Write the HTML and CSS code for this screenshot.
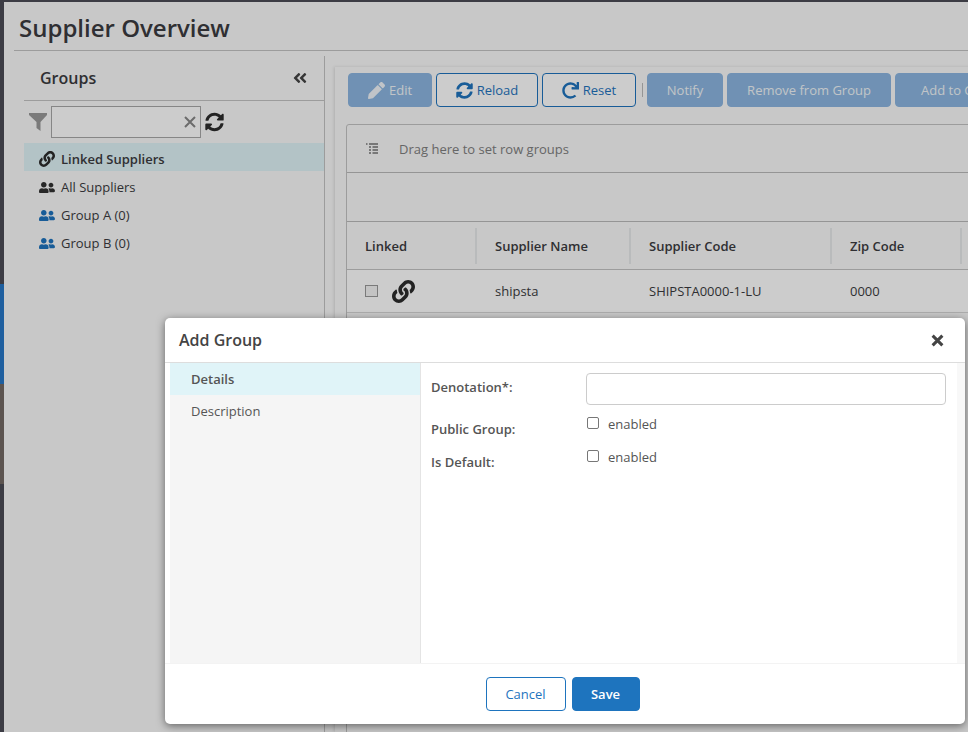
FILE: index.html
```html
<!DOCTYPE html>
<html>

<head>
    <title>Supplier Overview</title>
    <link rel="stylesheet" href="styles.css">
</head>

<body>
    <svg class="sprites" width="0" height="0">
        <symbol id="i-link" viewBox="0 0 512 512"><path d="M326.612 185.391c59.747 59.809 58.927 155.698.36 214.59-.11.12-.24.25-.36.37l-67.2 67.2c-59.27 59.27-155.699 59.262-214.96 0-59.27-59.26-59.27-155.7 0-214.96l37.106-37.106c9.84-9.84 26.786-3.3 27.294 10.606.648 17.722 3.826 35.527 9.69 52.721 1.986 5.822.567 12.262-3.783 16.612l-13.087 13.087c-28.026 28.026-28.905 73.66-1.155 101.96 28.024 28.579 74.086 28.749 102.325.51l67.2-67.19c28.191-28.191 28.073-73.757 0-101.83-3.701-3.694-7.429-6.564-10.341-8.569a16.037 16.037 0 0 1-6.947-12.606c-.396-10.567 3.348-21.456 11.698-29.806l21.054-21.055c5.521-5.521 14.182-6.199 20.584-1.731a152.482 152.482 0 0 1 20.522 17.197zM467.547 44.449c-59.261-59.262-155.69-59.27-214.96 0l-67.2 67.2c-.12.12-.25.25-.36.37-58.566 58.892-59.387 154.781.36 214.59a152.454 152.454 0 0 0 20.521 17.196c6.402 4.468 15.064 3.789 20.584-1.731l21.054-21.055c8.35-8.35 12.094-19.239 11.698-29.806a16.037 16.037 0 0 0-6.947-12.606c-2.912-2.005-6.64-4.875-10.341-8.569-28.073-28.073-28.191-73.639 0-101.83l67.2-67.19c28.239-28.239 74.3-28.069 102.325.51 27.75 28.3 26.872 73.934-1.155 101.96l-13.087 13.087c-4.35 4.35-5.769 10.79-3.783 16.612 5.864 17.194 9.042 34.999 9.69 52.721.509 13.906 17.454 20.446 27.294 10.606l37.106-37.106c59.271-59.259 59.271-155.699.001-214.959z"/></symbol>
        <symbol id="i-friends" viewBox="0 0 640 512"><path d="M192 256c61.9 0 112-50.1 112-112S253.9 32 192 32 80 82.1 80 144s50.1 112 112 112zm76.8 32h-8.3c-20.8 10-43.9 16-68.5 16s-47.6-6-68.5-16h-8.3C51.6 288 0 339.6 0 403.2V432c0 26.5 21.5 48 48 48h288c26.5 0 48-21.5 48-48v-28.8c0-63.6-51.6-115.2-115.2-115.2zM480 256c53 0 96-43 96-96s-43-96-96-96-96 43-96 96 43 96 96 96zm48 32h-3.8c-13.9 4.8-28.6 8-44.2 8s-30.3-3.2-44.2-8H432c-20.4 0-39.2 5.9-55.7 15.4 24.4 26.3 39.7 61.2 39.7 99.8v38.4c0 2.2-.5 4.3-.6 6.4H592c26.5 0 48-21.5 48-48 0-61.9-50.1-112-112-112z"/></symbol>
        <symbol id="i-sync" viewBox="0 0 512 512"><path d="M370.72 133.28C339.458 104.008 298.888 87.962 255.848 88c-77.458.068-144.328 53.178-162.791 126.85-1.344 5.363-6.122 9.15-11.651 9.15H24.103c-7.498 0-13.194-6.807-11.807-14.176C33.933 94.924 134.813 8 256 8c66.448 0 126.791 26.136 171.315 68.685L463.03 40.97C478.149 25.851 504 36.559 504 57.941V192c0 13.255-10.745 24-24 24H345.941c-21.382 0-32.09-25.851-16.971-40.971l41.75-41.749zM32 296h134.059c21.382 0 32.09 25.851 16.971 40.971l-41.75 41.75c31.262 29.273 71.835 45.319 114.876 45.28 77.418-.07 144.315-53.144 162.787-126.849 1.344-5.363 6.122-9.15 11.651-9.15h57.304c7.498 0 13.194 6.807 11.807 14.176C478.067 417.076 377.187 504 256 504c-66.448 0-126.791-26.136-171.315-68.685L48.97 471.03C33.851 486.149 8 475.441 8 454.059V320c0-13.255 10.745-24 24-24z"/></symbol>
        <symbol id="i-redo" viewBox="0 0 512 512"><path d="M500.33 0h-47.41a12 12 0 0 0-12 12.57l4 82.76A247.42 247.42 0 0 0 256 8C119.34 8 7.9 119.53 8 256.19 8.1 393.07 119.1 504 256 504a247.1 247.1 0 0 0 166.18-63.91 12 12 0 0 0 .48-17.43l-34-34a12 12 0 0 0-16.38-.55A176 176 0 1 1 402.1 157.8l-101.53-4.87a12 12 0 0 0-12.57 12v47.41a12 12 0 0 0 12 12h200.33a12 12 0 0 0 12-12V12a12 12 0 0 0-12-12z"/></symbol>
        <symbol id="i-pencil" viewBox="0 0 512 512"><path d="M497.9 142.1l-46.1 46.1c-4.7 4.7-12.3 4.7-17 0l-111-111c-4.7-4.7-4.7-12.3 0-17l46.1-46.1c18.7-18.7 49.1-18.7 67.9 0l60.1 60.1c18.8 18.7 18.8 49.1 0 67.9zM284.2 99.8L21.6 362.4.4 483.9c-2.9 16.4 11.4 30.6 27.8 27.8l121.5-21.3 262.6-262.6c4.7-4.7 4.7-12.3 0-17l-111-111c-4.8-4.7-12.4-4.7-17.1 0z"/></symbol>
        <symbol id="i-collapse" viewBox="0 0 448 512"><path d="M223.7 239l136-136c9.4-9.4 24.6-9.4 33.9 0l22.6 22.6c9.4 9.4 9.4 24.6 0 33.9L319.9 256l96.4 96.4c9.4 9.4 9.4 24.6 0 33.9L393.7 409c-9.4 9.4-24.6 9.4-33.9 0l-136-136c-9.5-9.4-9.5-24.6-.1-34zm-192 34l136 136c9.4 9.4 24.6 9.4 33.9 0l22.6-22.6c9.4-9.4 9.4-24.6 0-33.9L127.9 256l96.4-96.4c9.4-9.4 9.4-24.6 0-33.9L201.7 103c-9.4-9.4-24.6-9.4-33.9 0l-136 136c-9.5 9.4-9.5 24.6-.1 34z"/></symbol>
    </svg>

    <div class="app">
        <div class="strip">
            <div class="strip-top"></div>
            <div class="strip-blue"></div>
            <div class="strip-brown"></div>
            <div class="strip-dark"></div>
        </div>

        <div class="main">
            <div class="page-title">
                <h1>Supplier Overview</h1>
            </div>

            <div class="content">
                <div class="sidebar">
                    <div class="sidebar-head">
                        <h2>Groups</h2>
                        <svg class="collapse-icon"><use href="#i-collapse"></use></svg>
                    </div>

                    <div class="filter-row">
                        <svg class="filter-icon" viewBox="0 0 18 18"><path d="M0 0h18v2l-6.500 7v9l-4-3v-6L0 2z"></path></svg>
                        <div class="filter-box">
                            <input class="filter-input" type="text">
                            <svg class="clear-icon" viewBox="0 0 12 12"><path d="M1 1l10 10M11 1L1 11"></path></svg>
                        </div>
                        <svg class="reload-icon"><use href="#i-sync"></use></svg>
                    </div>

                    <div class="group-item group-item-active">
                        <svg class="group-link"><use href="#i-link"></use></svg>
                        Linked Suppliers
                    </div>
                    <div class="group-item">
                        <svg class="group-icon"><use href="#i-friends"></use></svg>
                        All Suppliers
                    </div>
                    <div class="group-item">
                        <svg class="group-icon group-icon-blue"><use href="#i-friends"></use></svg>
                        Group A (0)
                    </div>
                    <div class="group-item">
                        <svg class="group-icon group-icon-blue"><use href="#i-friends"></use></svg>
                        Group B (0)
                    </div>
                </div>

                <div class="panel">
                    <div class="toolbar">
                        <button class="btn btn-off btn-edit"><svg class="btn-icon"><use href="#i-pencil"></use></svg>Edit</button>
                        <button class="btn btn-line btn-reload"><svg class="btn-icon"><use href="#i-sync"></use></svg>Reload</button>
                        <button class="btn btn-line btn-reset"><svg class="btn-icon"><use href="#i-redo"></use></svg>Reset</button>
                        <div class="toolbar-sep"></div>
                        <button class="btn btn-off btn-notify">Notify</button>
                        <button class="btn btn-off btn-remove">Remove from Group</button>
                        <button class="btn btn-off btn-add">Add to Group</button>
                    </div>

                    <div class="grid">
                        <div class="grid-groups">
                            <svg class="groups-icon" viewBox="0 0 14 12"><path d="M1 1h1.500M4 1h9M4 4h2M7.500 4h5.500M4 7h2M7.500 7h5.500M4 10h2M7.500 10h5.500"></path></svg>
                            Drag here to set row groups
                        </div>
                        <div class="grid-filter"></div>
                        <div class="grid-head">
                            <div class="head-cell">Linked</div>
                            <div class="head-cell">Supplier Name</div>
                            <div class="head-cell">Supplier Code</div>
                            <div class="head-cell">Zip Code</div>
                            <div class="head-cell head-cell-last"></div>
                        </div>
                        <div class="grid-row">
                            <div class="cell cell-linked">
                                <span class="row-check"></span>
                                <svg class="row-link"><use href="#i-link"></use></svg>
                            </div>
                            <div class="cell">shipsta</div>
                            <div class="cell">SHIPSTA0000-1-LU</div>
                            <div class="cell">0000</div>
                            <div class="cell"></div>
                        </div>
                    </div>
                </div>
            </div>
        </div>
    </div>

    <div class="overlay"></div>

    <div class="modal">
        <div class="modal-head">
            <h3>Add Group</h3>
            <svg class="modal-close" viewBox="0 0 12 12"><path d="M1.500 1.500l9 9M10.500 1.500l-9 9"></path></svg>
        </div>

        <div class="modal-body">
            <div class="modal-nav">
                <div class="nav-item nav-item-active">Details</div>
                <div class="nav-item">Description</div>
            </div>

            <div class="modal-form">
                <div class="form-row form-row-text">
                    <label class="form-label">Denotation*:</label>
                    <input class="form-input" type="text">
                </div>
                <div class="form-row">
                    <label class="form-label">Public Group:</label>
                    <div class="form-check"><input type="checkbox">enabled</div>
                </div>
                <div class="form-row">
                    <label class="form-label">Is Default:</label>
                    <div class="form-check"><input type="checkbox">enabled</div>
                </div>
            </div>

            <div class="modal-scroll"></div>
        </div>

        <div class="modal-foot">
            <button class="btn btn-line btn-cancel">Cancel</button>
            <button class="btn btn-save">Save</button>
        </div>
    </div>
</body>

</html>
```

FILE: styles.css
```css
html,
body {
    margin: 0;
    height: 732px;
    overflow: hidden;
}

body {
    position: relative;
    background-color: #fafafa;
    color: #3b3b40;
    font-family: "Open Sans", "Liberation Sans", sans-serif;
    font-size: 13px;
}

.sprites {
    position: absolute;
}

.app {
    display: flex;
    height: 732px;
    border-top: 2px solid #4c4c56;
    box-sizing: border-box;
}

.strip {
    display: flex;
    flex-direction: column;
    flex: none;
    width: 4px;
}

.strip-top {
    flex: none;
    height: 282px;
    background-color: #4c4c56;
}

.strip-dark {
    flex: 1;
    background-color: #4c4c56;
}

.strip-blue {
    flex: none;
    height: 100px;
    background-color: #2777c7;
}

.strip-brown {
    flex: none;
    height: 100px;
    background-color: #736964;
}

.main {
    flex: 1;
    min-width: 0;
    padding-left: 10px;
}

.page-title {
    display: flex;
    align-items: center;
    box-sizing: border-box;
    height: 49px;
    padding: 2px 0 0 5px;
    border-bottom: 1px solid #c4c4c4;
}

.page-title h1 {
    margin: 0;
    font-size: 24px;
    font-weight: 600;
}

.content {
    display: flex;
    height: 681px;
}

.sidebar {
    flex: none;
    width: 300px;
    margin-top: 5px;
    margin-left: 10px;
    border-right: 1px solid #c4c4c4;
}

.sidebar-head {
    display: flex;
    align-items: center;
    justify-content: space-between;
    height: 44px;
    padding: 0 17px 0 16px;
    border-bottom: 1px solid #c4c4c4;
}

.sidebar-head h2 {
    margin: 0;
    font-size: 16px;
    font-weight: 600;
}

.collapse-icon {
    width: 14px;
    height: 16px;
    fill: #444;
}

.filter-row {
    display: flex;
    align-items: center;
    height: 32px;
    margin-top: 5px;
    margin-bottom: 5px;
    padding-left: 5px;
}

.filter-icon {
    width: 18px;
    height: 18px;
    fill: #999;
    margin-right: 4px;
}

.filter-box {
    display: flex;
    align-items: center;
    box-sizing: border-box;
    width: 150px;
    height: 32px;
    background-color: #fff;
    border: 1px solid #a8a8a8;
}

.filter-input {
    flex: 1;
    min-width: 0;
    border: 0;
    background: transparent;
}

.clear-icon {
    width: 12px;
    height: 12px;
    margin-right: 4px;
    fill: none;
    stroke: #888;
    stroke-width: 2;
}

.reload-icon {
    width: 19px;
    height: 20px;
    margin-left: 4px;
    fill: #2c2c2c;
}

.group-item {
    display: flex;
    align-items: center;
    box-sizing: border-box;
    height: 28px;
    padding: 4px 0 0 15px;
    font-size: 13px;
}

.group-item-active {
    background-color: #e0f4f8;
    font-weight: 600;
}

.group-link {
    width: 16px;
    height: 16px;
    margin-right: 6px;
    fill: #2c2c2c;
}

.group-icon {
    width: 16px;
    height: 13px;
    margin-right: 6px;
    fill: #333;
}

.group-icon-blue {
    fill: #1e74be;
}

.panel {
    flex: none;
    width: 700px;
    margin-top: 16px;
    margin-left: 10px;
    padding: 6px 0 0 12px;
    box-shadow: -1px 0 3px rgba(0, 0, 0, 0.12);
}

.toolbar {
    display: flex;
    align-items: center;
    gap: 4px;
    padding-left: 1px;
    white-space: nowrap;
}

.btn {
    display: flex;
    flex: none;
    align-items: center;
    justify-content: center;
    box-sizing: border-box;
    height: 34px;
    border-radius: 4px;
    font-family: "Open Sans", "Liberation Sans", sans-serif;
    font-size: 13px;
}

.btn-off {
    background-color: #8cb6e1;
    border: 1px solid #8cb6e1;
    color: #f2f6fa;
}

.btn-line {
    background-color: #fff;
    border: 1px solid #1e74be;
    color: #1e74be;
}

.btn-icon {
    width: 17px;
    height: 17px;
    margin-right: 4px;
    fill: currentColor;
}

.btn-edit {
    width: 84px;
}

.btn-reload {
    width: 102px;
}

.btn-reset {
    width: 94px;
}

.toolbar-sep {
    width: 1px;
    height: 14px;
    margin: 0 0 0 2px;
    background-color: #bbb;
}

.btn-notify {
    width: 76px;
}

.btn-remove {
    width: 164px;
}

.btn-add {
    padding-left: 25px;
    padding-right: 20px;
}

.grid {
    box-sizing: border-box;
    height: 620px;
    margin-top: 17px;
    margin-left: -1px;
    border: 1px solid #c4c4c4;
    border-radius: 3px 0 0 0;
}

.grid-groups {
    display: flex;
    align-items: center;
    height: 47px;
    padding-left: 18px;
    border-bottom: 1px solid #bbb;
    color: #808080;
}

.groups-icon {
    width: 14px;
    height: 12px;
    margin-right: 20px;
    fill: none;
    stroke: #333;
    stroke-width: 1;
}

.grid-filter {
    height: 48px;
    border-bottom: 1px solid #bbb;
}

.grid-head,
.grid-row {
    display: grid;
    grid-template-columns: 130px 154px 201px 130px 1fr;
}

.grid-head {
    align-items: center;
    height: 47px;
    border-bottom: 1px solid #c4c4c4;
    font-weight: 600;
}

.head-cell {
    display: flex;
    align-items: center;
    box-sizing: border-box;
    height: 36px;
    padding-left: 18px;
    border-right: 2px solid #e8eaec;
}

.head-cell-last {
    border-right: 0;
}

.grid-row {
    align-items: center;
    height: 42px;
    background-color: #fff;
    border-bottom: 1px solid #d8d8d8;
}

.cell {
    display: flex;
    align-items: center;
    padding-left: 18px;
}

.cell-linked {
    gap: 14px;
}

.row-check {
    box-sizing: border-box;
    width: 13px;
    height: 12px;
    border: 1px solid #999;
    background-color: #f4f4f4;
}

.row-link {
    width: 23px;
    height: 23px;
    fill: #2c2c2c;
}

.overlay {
    position: absolute;
    top: 0;
    left: 0;
    right: 0;
    bottom: 0;
    background-color: rgba(0, 0, 0, 0.2);
}

.modal {
    position: absolute;
    top: 318px;
    left: 165px;
    display: flex;
    flex-direction: column;
    width: 800px;
    height: 406px;
    background-color: #fff;
    border-radius: 5px;
    box-shadow: 0 2px 8px rgba(0, 0, 0, 0.5);
    color: #555;
}

.modal-head {
    display: flex;
    flex: none;
    align-items: center;
    justify-content: space-between;
    height: 44px;
    padding: 0 21px 0 14px;
    border-bottom: 1px solid #ddd;
}

.modal-head h3 {
    margin: 0;
    color: #444;
    font-size: 16px;
    font-weight: 600;
}

.modal-close {
    width: 13px;
    height: 13px;
    fill: none;
    stroke: #444;
    stroke-width: 2.8;
}

.modal-body {
    display: flex;
    flex: none;
    height: 300px;
    padding-left: 5px;
    border-bottom: 1px solid #f3f3f3;
}

.modal-nav {
    flex: none;
    width: 250px;
    background-color: #f5f5f5;
    border-right: 1px solid #e4e4e4;
}

.nav-item {
    display: flex;
    align-items: center;
    height: 32px;
    padding-left: 21px;
}

.nav-item-active {
    background-color: #e0f4f8;
    font-weight: 600;
}

.modal-form {
    flex: 1;
    padding: 10px 0 0 10px;
}

.form-row {
    display: flex;
    height: 33px;
}

.form-row-text {
    height: 39px;
}

.form-label {
    flex: none;
    width: 155px;
    padding-top: 7px;
    font-weight: 600;
    line-height: 20px;
}

.form-row-text .form-label {
    padding-top: 4px;
}

.form-input {
    box-sizing: border-box;
    width: 360px;
    height: 32px;
    border: 1px solid #ccc;
    border-radius: 4px;
}

.form-check {
    display: flex;
    align-items: center;
    height: 24px;
}

.form-check input {
    appearance: none;
    box-sizing: border-box;
    width: 12px;
    height: 12px;
    margin: 0 9px 2px 1px;
    background-color: #fff;
    border: 1px solid #777;
    border-radius: 2px;
}

.modal-scroll {
    flex: none;
    width: 8px;
    background-color: #f8f8f8;
}

.modal-foot {
    display: flex;
    flex: 1;
    align-items: center;
    justify-content: center;
    gap: 6px;
    padding-right: 5px;
}

.btn-cancel {
    width: 80px;
}

.btn-save {
    width: 68px;
    background-color: #1e74be;
    border: 1px solid #1e74be;
    color: #fff;
    font-weight: 600;
}
```
